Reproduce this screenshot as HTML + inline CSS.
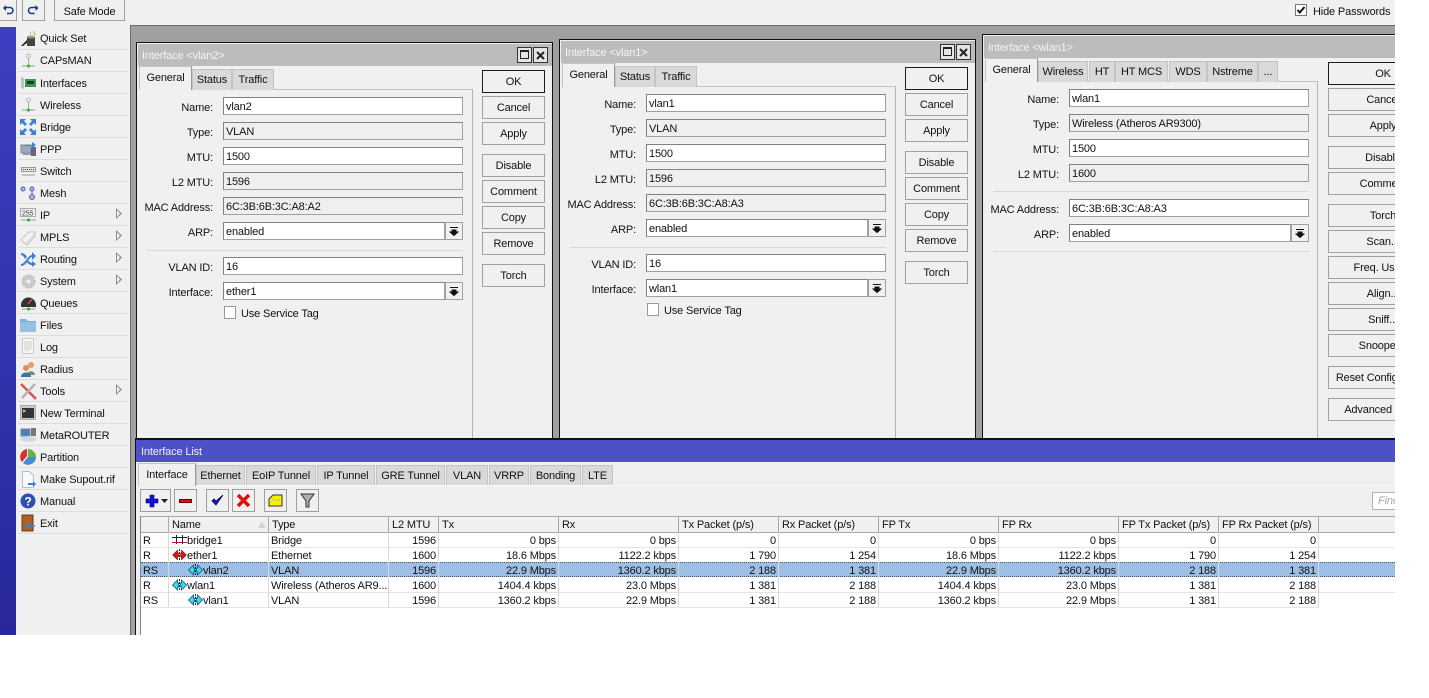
<!DOCTYPE html>
<html><head><meta charset="utf-8"><style>
html,body{margin:0;padding:0;background:#fff}
body{width:1429px;height:698px;overflow:hidden;position:relative;font:11px "Liberation Sans",Arial,sans-serif;color:#111;letter-spacing:-.15px}
#app{position:absolute;left:0;top:0;width:1395px;height:635px;overflow:hidden;background:#f0f0f0}
#app div,#app span,#app svg{position:absolute;box-sizing:border-box}
.t{white-space:nowrap;height:14px;line-height:16px}
.r{text-align:right}
.b{border:1px solid #a0a0a0;background:#f0f0f0;text-align:center;white-space:nowrap;padding-top:1px}
.ok{border-color:#1c1c1c}
.f{width:240px;height:18px;border:1px solid #a0a0a0;border-left-color:#808080;border-top-color:#808080;background:#fff;line-height:18px;padding-left:2px;white-space:nowrap}
.ro{background:#efefef}
.win{border:1px solid #111;background:#f0f0f0;overflow:hidden}
.tb{left:1px;top:1px;height:22px;background:#bcbcbc;color:#f4f4f4;padding-left:4px;line-height:24px}
.tab{top:26px;height:21px;background:#d9d9d9;border:1px solid #c4c4c4;border-bottom:0;text-align:center;line-height:21px;white-space:nowrap}
.act{background:#f0f0f0;border:1px solid #c4c4c4;border-right-color:#9a9a9a;border-bottom:0;z-index:2;top:23px;height:24px;line-height:23px}
.m{left:18px;width:110px;height:1px;background:#dcdcdc}
.mt{left:40px;white-space:nowrap;height:14px;line-height:16px}
.ar{left:116px;width:6px;height:11px;background:#8a8a8a;clip-path:polygon(0 0,100% 50%,0 100%)}
.ar:after{content:"";position:absolute;left:1px;top:2px;width:3px;height:7px;background:#f8f8f8;clip-path:polygon(0 0,100% 50%,0 100%)}
.h{top:516px;height:17px;background:#f0f0f0;border-right:1px solid #a8a8a8;border-bottom:1px solid #a8a8a8;border-top:1px solid #a8a8a8;line-height:16px;padding-left:3px;white-space:nowrap;overflow:hidden}
.c{height:15px;line-height:16px;white-space:nowrap}
.cr{text-align:right}
.v{top:532px;width:1px;height:75px;background:#d8d8d8}
.hl{left:141px;top:562px;width:1254px;height:15px;background:#9dbfe6;border-top:1px dotted #555;border-bottom:1px dotted #555}
.wb{width:110px!important}
</style></head><body>
<div id="app">
<!-- top bar -->
<div class="b" style="left:-4px;top:-2px;width:21px;height:23px"></div>
<svg style="left:2px;top:4px" width="12" height="12" viewBox="0 0 12 12"><path d="M3.500 3.500H8a3 3 0 0 1 0 6H5" fill="none" stroke="#123a78" stroke-width="1.500"/><path d="M1 4l3-3v6z" fill="#123a78"/></svg>
<div class="b" style="left:22px;top:-2px;width:23px;height:23px"></div>
<svg style="left:27px;top:4px" width="13" height="12" viewBox="0 0 12 12"><path d="M8.500 3.500H4a3 3 0 0 0 0 6h3" fill="none" stroke="#123a78" stroke-width="1.500"/><path d="M11 4L8 1v6z" fill="#123a78"/></svg>
<div class="b" style="left:54px;top:-2px;width:71px;height:23px;line-height:25px">Safe Mode</div>
<div style="left:1295px;top:4px;width:12px;height:12px;border:1px solid #777;background:#fff"></div>
<svg style="left:1296px;top:5px" width="10" height="10" viewBox="0 0 10 10"><path d="M1.500 5l2.300 2.500L8.500 2" fill="none" stroke="#111" stroke-width="2"/></svg>
<div class="t" style="left:1313px;top:4px">Hide Passwords</div>

<!-- left -->
<div style="left:0;top:27px;width:16px;height:608px;background:linear-gradient(#3e3ec0,#28289c)"></div>
<div style="left:130px;top:25px;width:1265px;height:610px;background:#a0a0a0;border-left:1px solid #6c6c6c;border-top:1px solid #6c6c6c"></div>
<div style="left:0;top:25px;width:130px;height:2px;background:#f0f0f0"></div>

<div class="mt" style="top:31px">Quick Set</div><div class="m" style="top:49px"></div>
<div class="mt" style="top:53px">CAPsMAN</div><div class="m" style="top:71px"></div>
<div class="mt" style="top:76px">Interfaces</div><div class="m" style="top:93px"></div>
<div class="mt" style="top:98px">Wireless</div><div class="m" style="top:115px"></div>
<div class="mt" style="top:120px">Bridge</div><div class="m" style="top:137px"></div>
<div class="mt" style="top:142px">PPP</div><div class="m" style="top:159px"></div>
<div class="mt" style="top:164px">Switch</div><div class="m" style="top:181px"></div>
<div class="mt" style="top:186px">Mesh</div><div class="m" style="top:203px"></div>
<div class="mt" style="top:208px">IP</div><div class="m" style="top:225px"></div><div class="ar" style="top:208px"></div>
<div class="mt" style="top:230px">MPLS</div><div class="m" style="top:247px"></div><div class="ar" style="top:230px"></div>
<div class="mt" style="top:252px">Routing</div><div class="m" style="top:269px"></div><div class="ar" style="top:252px"></div>
<div class="mt" style="top:274px">System</div><div class="m" style="top:291px"></div><div class="ar" style="top:274px"></div>
<div class="mt" style="top:296px">Queues</div><div class="m" style="top:313px"></div>
<div class="mt" style="top:318px">Files</div><div class="m" style="top:335px"></div>
<div class="mt" style="top:340px">Log</div><div class="m" style="top:357px"></div>
<div class="mt" style="top:362px">Radius</div><div class="m" style="top:379px"></div>
<div class="mt" style="top:384px">Tools</div><div class="m" style="top:401px"></div><div class="ar" style="top:384px"></div>
<div class="mt" style="top:406px">New Terminal</div><div class="m" style="top:423px"></div>
<div class="mt" style="top:428px">MetaROUTER</div><div class="m" style="top:445px"></div>
<div class="mt" style="top:450px">Partition</div><div class="m" style="top:467px"></div>
<div class="mt" style="top:472px">Make Supout.rif</div><div class="m" style="top:489px"></div>
<div class="mt" style="top:494px">Manual</div><div class="m" style="top:511px"></div>
<div class="mt" style="top:516px">Exit</div><div class="m" style="top:533px"></div>

<!-- sidebar icons -->
<svg style="left:20px;top:30px" width="17" height="17" viewBox="0 0 17 17"><path d="M1 16l6-6 1 2-5 4z" fill="#222"/><path d="M7 7h8v9H7z" fill="#444"/><ellipse cx="11" cy="7" rx="4" ry="1.500" fill="#999"/><path d="M10 2l1 2M14 1v3M16 4l-2 1" stroke="#d8b040"/></svg>
<svg style="left:20px;top:53px" width="17" height="16" viewBox="0 0 17 16"><circle cx="8.500" cy="3" r="2" fill="none" stroke="#bbb"/><path d="M8.500 5v8" stroke="#aaa"/><path d="M2 13h13" stroke="#7ab07a"/><circle cx="8.500" cy="13" r="1.500" fill="#3aa03a"/></svg>
<svg style="left:20px;top:75px" width="17" height="16" viewBox="0 0 17 16"><path d="M1 2l3 1v11l-3-1z" fill="#b8c4c8"/><rect x="5" y="4" width="11" height="8" fill="#3a9a4a"/><rect x="7" y="6" width="7" height="3" fill="#234"/></svg>
<svg style="left:20px;top:97px" width="17" height="16" viewBox="0 0 17 16"><circle cx="8.500" cy="3" r="2" fill="none" stroke="#bbb"/><path d="M8.500 5v8" stroke="#aaa"/><path d="M2 13h13" stroke="#7ab07a"/><circle cx="8.500" cy="13" r="1.500" fill="#3aa03a"/></svg>
<svg style="left:20px;top:119px" width="16" height="16" viewBox="0 0 16 16" fill="#3a80d8"><path d="M0 0h6L4 2l3 3-2 2-3-3-2 2zM16 0v6l-2-2-3 3-2-2 3-3-2-2zM0 16v-6l2 2 3-3 2 2-3 3 2 2zM16 16h-6l2-2-3-3 2-2 3 3 2-2z"/></svg>
<svg style="left:20px;top:141px" width="17" height="16" viewBox="0 0 17 16"><rect x="1" y="4" width="10" height="8" fill="#9ab" stroke="#789"/><rect x="11" y="6" width="5" height="9" fill="#667"/><path d="M6 4h6V1l4 3-4 3V5H6z" fill="#3a80d8"/><path d="M3 13h8" stroke="#999" stroke-width="2"/></svg>
<svg style="left:20px;top:165px" width="17" height="12" viewBox="0 0 17 12"><path d="M1.500 2.500h14v4h-14z" fill="#e4e4e4" stroke="#999"/><path d="M3 4.500h11" stroke="#444" stroke-dasharray="1 1"/><path d="M2 10h13" stroke="#7ab07a"/></svg>
<svg style="left:20px;top:186px" width="16" height="15" viewBox="0 0 16 15" fill="#a8b8e8" stroke="#5060b0"><circle cx="3" cy="3" r="2"/><circle cx="12" cy="3" r="2"/><circle cx="12" cy="11" r="2.500"/><path d="M12 5v3" fill="none"/></svg>
<svg style="left:20px;top:208px" width="17" height="15" viewBox="0 0 17 15"><rect x=".5" y=".5" width="15" height="8" fill="#eee" stroke="#aaa"/><text x="2" y="7.500" font-family="Liberation Sans" font-size="7" fill="#444">255</text><path d="M1 12h15" stroke="#7ab07a"/><circle cx="8.500" cy="12" r="1.500" fill="#3aa03a"/></svg>
<svg style="left:20px;top:230px" width="17" height="16" viewBox="0 0 17 16"><path d="M1 10l8-8h6v4l-8 9z" fill="#f4f4f4" stroke="#c4c4c4"/><path d="M6 13l9-9" stroke="#ccc"/></svg>
<svg style="left:20px;top:251px" width="17" height="16" viewBox="0 0 17 16"><path d="M1 13C5 13 8 4 12 4V1l4 4-4 4V6C9 6 7 15 1 15z" fill="#3a80d8"/><path d="M1 2c3 0 5 2 6 4l-2 2C4 6 3 4 1 4zM9 10c1 1 2 2 3 2v-2l4 3-4 3v-2c-2 0-4-1-5-3z" fill="#3a80d8"/></svg>
<svg style="left:21px;top:274px" width="15" height="15" viewBox="0 0 16 16"><circle cx="8" cy="8" r="6.500" fill="#cfcfcf" stroke="#bcbcbc" stroke-width="2" stroke-dasharray="2 1"/><circle cx="8" cy="8" r="3" fill="#eee" stroke="#bbb"/></svg>
<svg style="left:20px;top:295px" width="17" height="17" viewBox="0 0 17 17"><path d="M1 10a7.500 7.500 0 0 1 15 0v2H1z" fill="#333"/><path d="M8 9l4-5" stroke="#e04444" stroke-width="1.500"/><path d="M2 14h13" stroke="#7ab07a"/><circle cx="8.500" cy="14" r="1.500" fill="#3aa03a"/></svg>
<svg style="left:20px;top:317px" width="16" height="15" viewBox="0 0 16 15"><path d="M0 2h6l2 2h8v11H0z" fill="#7fb0d8"/><path d="M0 5h16v10H0z" fill="#96c0e0"/></svg>
<svg style="left:22px;top:338px" width="12" height="16" viewBox="0 0 12 16"><rect x=".5" y=".5" width="11" height="15" fill="#f5f8f4" stroke="#ccc"/><path d="M2 4h8M2 6h8M2 8h8M2 10h8M2 12h6" stroke="#c8d4c4"/></svg>
<svg style="left:20px;top:361px" width="17" height="16" viewBox="0 0 17 16"><circle cx="11" cy="4" r="3" fill="#e0a070"/><path d="M7 14c0-5 8-5 8 0z" fill="#6a9a5a"/><circle cx="6" cy="7" r="3" fill="#d89060"/><path d="M1 16c0-6 10-6 10 0z" fill="#3a70b0"/></svg>
<svg style="left:20px;top:383px" width="17" height="17" viewBox="0 0 17 17"><path d="M1 1l15 15" stroke="#d85050" stroke-width="2.500"/><path d="M15 1L2 15" stroke="#b4b4b4" stroke-width="2.500"/></svg>
<svg style="left:20px;top:405px" width="16" height="15" viewBox="0 0 16 15"><rect x=".5" y=".5" width="15" height="14" fill="#ccc" stroke="#aaa"/><rect x="2" y="3" width="12" height="10" fill="#333"/><path d="M3 5l2 1-2 1" stroke="#ddd" fill="none"/></svg>
<svg style="left:20px;top:427px" width="17" height="16" viewBox="0 0 17 16"><rect x="1" y="2" width="9" height="7" fill="#4a80c0" stroke="#789"/><rect x="11" y="1" width="5" height="8" fill="#777"/><ellipse cx="8.500" cy="12" rx="8" ry="3" fill="#cfd8e4"/></svg>
<svg style="left:20px;top:449px" width="16" height="16" viewBox="0 0 16 16"><path d="M8 8V0a8 8 0 0 1 8 8z" fill="#6ab04a"/><path d="M8 8h8a8 8 0 0 1-13 6z" fill="#3a90d0"/><path d="M7 7L2 13A8 8 0 0 1 7 0z" fill="#d83030"/></svg>
<svg style="left:22px;top:471px" width="15" height="17" viewBox="0 0 15 17"><path d="M.5.500h7l4 4v12H.5z" fill="#f8f8ff" stroke="#bbc"/><path d="M6 12h5v-2l3 3-3 3v-2H6z" fill="#3a80d8"/></svg>
<svg style="left:20px;top:493px" width="16" height="16" viewBox="0 0 16 16"><circle cx="8" cy="8" r="7.500" fill="#2c50b0"/><text x="4.500" y="12.500" font-family="Liberation Sans" font-weight="700" font-size="12" fill="#fff">?</text></svg>
<svg style="left:21px;top:514px" width="15" height="18" viewBox="0 0 15 18"><rect x="1" y="1" width="11" height="16" fill="#a8602c" stroke="#6a3a18"/><path d="M7 12h7M9 10l-3 2 3 2" stroke="#3a80d8" fill="none" stroke-width="1.500"/></svg>

<!-- window 1 -->
<div class="win" style="left:136px;top:42px;width:417px;height:420px">
 <div class="tb" style="width:414px">Interface &lt;vlan2&gt;</div>
 <div class="b" style="left:380px;top:4px;width:15px;height:16px;border-color:#333;background:#e4e4e4"></div><div style="left:383px;top:7px;width:9px;height:9px;border:1px solid #222;border-top-width:2px"></div>
 <div class="b" style="left:396px;top:4px;width:15px;height:16px;border-color:#333;background:#e4e4e4"></div><svg style="left:399px;top:8px" width="9" height="9" viewBox="0 0 9 9"><path d="M1 1l7 7M8 1L1 8" stroke="#222" stroke-width="2"/></svg>
 <div style="left:2px;top:46px;width:333px;height:1px;background:#c4c4c4"></div><div style="left:335px;top:46px;width:1px;height:360px;background:#b4b4b4"></div>
 <div class="tab act" style="left:2px;width:53px">General</div><div class="tab" style="left:55px;width:40px">Status</div><div class="tab" style="left:95px;width:42px">Traffic</div>
 <div class="t r" style="left:0;width:76px;top:57px">Name:</div><div class="f" style="left:86px;top:54px">vlan2</div>
 <div class="t r" style="left:0;width:76px;top:82px">Type:</div><div class="f ro" style="left:86px;top:79px">VLAN</div>
 <div class="t r" style="left:0;width:76px;top:107px">MTU:</div><div class="f" style="left:86px;top:104px">1500</div>
 <div class="t r" style="left:0;width:76px;top:132px">L2 MTU:</div><div class="f ro" style="left:86px;top:129px">1596</div>
 <div class="t r" style="left:0;width:76px;top:157px">MAC Address:</div><div class="f ro" style="left:86px;top:154px">6C:3B:6B:3C:A8:A2</div>
 <div class="t r" style="left:0;width:76px;top:182px">ARP:</div><div class="f" style="left:86px;top:179px;width:222px">enabled</div>
 <div class="b" style="left:308px;top:179px;width:18px;height:18px"></div><svg style="left:312px;top:183px" width="10" height="10" viewBox="0 0 10 10"><path d="M1 1.500h8M3 4h4v2h2L5 9.500 1 6h2z" stroke="#111" fill="#111"/></svg>
 <div style="left:10px;top:207px;width:316px;height:1px;background:#d8d8d8"></div>
 <div class="t r" style="left:0;width:76px;top:217px">VLAN ID:</div><div class="f" style="left:86px;top:214px">16</div>
 <div class="t r" style="left:0;width:76px;top:242px">Interface:</div><div class="f" style="left:86px;top:239px;width:222px">ether1</div>
 <div class="b" style="left:308px;top:239px;width:18px;height:18px"></div><svg style="left:312px;top:243px" width="10" height="10" viewBox="0 0 10 10"><path d="M1 1.500h8M3 4h4v2h2L5 9.500 1 6h2z" stroke="#111" fill="#111"/></svg>
 <div style="left:87px;top:263px;width:12px;height:13px;border:1px solid #999;background:#fff"></div><div class="t" style="left:104px;top:263px">Use Service Tag</div>
 <div class="b ok" style="left:345px;top:27px;width:63px;height:23px;line-height:21px">OK</div>
 <div class="b" style="left:345px;top:53px;width:63px;height:23px;line-height:21px">Cancel</div>
 <div class="b" style="left:345px;top:79px;width:63px;height:23px;line-height:21px">Apply</div>
 <div class="b" style="left:345px;top:111px;width:63px;height:23px;line-height:21px">Disable</div>
 <div class="b" style="left:345px;top:137px;width:63px;height:23px;line-height:21px">Comment</div>
 <div class="b" style="left:345px;top:163px;width:63px;height:23px;line-height:21px">Copy</div>
 <div class="b" style="left:345px;top:189px;width:63px;height:23px;line-height:21px">Remove</div>
 <div class="b" style="left:345px;top:221px;width:63px;height:23px;line-height:21px">Torch</div>
</div>

<!-- window 2 -->
<div class="win" style="left:559px;top:39px;width:417px;height:420px">
 <div class="tb" style="width:414px">Interface &lt;vlan1&gt;</div>
 <div class="b" style="left:380px;top:4px;width:15px;height:16px;border-color:#333;background:#e4e4e4"></div><div style="left:383px;top:7px;width:9px;height:9px;border:1px solid #222;border-top-width:2px"></div>
 <div class="b" style="left:396px;top:4px;width:15px;height:16px;border-color:#333;background:#e4e4e4"></div><svg style="left:399px;top:8px" width="9" height="9" viewBox="0 0 9 9"><path d="M1 1l7 7M8 1L1 8" stroke="#222" stroke-width="2"/></svg>
 <div style="left:2px;top:46px;width:333px;height:1px;background:#c4c4c4"></div><div style="left:335px;top:46px;width:1px;height:360px;background:#b4b4b4"></div>
 <div class="tab act" style="left:2px;width:53px">General</div><div class="tab" style="left:55px;width:40px">Status</div><div class="tab" style="left:95px;width:42px">Traffic</div>
 <div class="t r" style="left:0;width:76px;top:57px">Name:</div><div class="f" style="left:86px;top:54px">vlan1</div>
 <div class="t r" style="left:0;width:76px;top:82px">Type:</div><div class="f ro" style="left:86px;top:79px">VLAN</div>
 <div class="t r" style="left:0;width:76px;top:107px">MTU:</div><div class="f" style="left:86px;top:104px">1500</div>
 <div class="t r" style="left:0;width:76px;top:132px">L2 MTU:</div><div class="f ro" style="left:86px;top:129px">1596</div>
 <div class="t r" style="left:0;width:76px;top:157px">MAC Address:</div><div class="f ro" style="left:86px;top:154px">6C:3B:6B:3C:A8:A3</div>
 <div class="t r" style="left:0;width:76px;top:182px">ARP:</div><div class="f" style="left:86px;top:179px;width:222px">enabled</div>
 <div class="b" style="left:308px;top:179px;width:18px;height:18px"></div><svg style="left:312px;top:183px" width="10" height="10" viewBox="0 0 10 10"><path d="M1 1.500h8M3 4h4v2h2L5 9.500 1 6h2z" stroke="#111" fill="#111"/></svg>
 <div style="left:10px;top:207px;width:316px;height:1px;background:#d8d8d8"></div>
 <div class="t r" style="left:0;width:76px;top:217px">VLAN ID:</div><div class="f" style="left:86px;top:214px">16</div>
 <div class="t r" style="left:0;width:76px;top:242px">Interface:</div><div class="f" style="left:86px;top:239px;width:222px">wlan1</div>
 <div class="b" style="left:308px;top:239px;width:18px;height:18px"></div><svg style="left:312px;top:243px" width="10" height="10" viewBox="0 0 10 10"><path d="M1 1.500h8M3 4h4v2h2L5 9.500 1 6h2z" stroke="#111" fill="#111"/></svg>
 <div style="left:87px;top:263px;width:12px;height:13px;border:1px solid #999;background:#fff"></div><div class="t" style="left:104px;top:263px">Use Service Tag</div>
 <div class="b ok" style="left:345px;top:27px;width:63px;height:23px;line-height:21px">OK</div>
 <div class="b" style="left:345px;top:53px;width:63px;height:23px;line-height:21px">Cancel</div>
 <div class="b" style="left:345px;top:79px;width:63px;height:23px;line-height:21px">Apply</div>
 <div class="b" style="left:345px;top:111px;width:63px;height:23px;line-height:21px">Disable</div>
 <div class="b" style="left:345px;top:137px;width:63px;height:23px;line-height:21px">Comment</div>
 <div class="b" style="left:345px;top:163px;width:63px;height:23px;line-height:21px">Copy</div>
 <div class="b" style="left:345px;top:189px;width:63px;height:23px;line-height:21px">Remove</div>
 <div class="b" style="left:345px;top:221px;width:63px;height:23px;line-height:21px">Torch</div>
</div>

<!-- window 3 -->
<div class="win" style="left:982px;top:34px;width:480px;height:420px">
 <div class="tb" style="width:477px">Interface &lt;wlan1&gt;</div>
 <div style="left:2px;top:46px;width:333px;height:1px;background:#c4c4c4"></div><div style="left:334px;top:46px;width:1px;height:360px;background:#b4b4b4"></div>
 <div class="tab act" style="left:2px;width:53px">General</div>
 <div class="tab" style="left:55px;width:50px">Wireless</div><div class="tab" style="left:106px;width:26px">HT</div><div class="tab" style="left:132px;width:53px">HT MCS</div><div class="tab" style="left:186px;width:38px">WDS</div><div class="tab" style="left:224px;width:51px">Nstreme</div><div class="tab" style="left:275px;width:20px">...</div>
 <div class="t r" style="left:0;width:76px;top:57px">Name:</div><div class="f" style="left:86px;top:54px">wlan1</div>
 <div class="t r" style="left:0;width:76px;top:82px">Type:</div><div class="f ro" style="left:86px;top:79px">Wireless (Atheros AR9300)</div>
 <div class="t r" style="left:0;width:76px;top:107px">MTU:</div><div class="f" style="left:86px;top:104px">1500</div>
 <div class="t r" style="left:0;width:76px;top:132px">L2 MTU:</div><div class="f ro" style="left:86px;top:129px">1600</div>
 <div style="left:10px;top:156px;width:316px;height:1px;background:#d8d8d8"></div>
 <div class="t r" style="left:0;width:76px;top:167px">MAC Address:</div><div class="f" style="left:86px;top:164px">6C:3B:6B:3C:A8:A3</div>
 <div class="t r" style="left:0;width:76px;top:192px">ARP:</div><div class="f" style="left:86px;top:189px;width:222px">enabled</div>
 <div class="b" style="left:308px;top:189px;width:18px;height:18px"></div><svg style="left:312px;top:193px" width="10" height="10" viewBox="0 0 10 10"><path d="M1 1.500h8M3 4h4v2h2L5 9.500 1 6h2z" stroke="#111" fill="#111"/></svg>
 <div style="left:10px;top:216px;width:316px;height:1px;background:#d8d8d8"></div>
 <div class="b ok wb" style="left:345px;top:27px;height:23px;line-height:21px">OK</div>
 <div class="b wb" style="left:345px;top:53px;height:23px;line-height:21px">Cancel</div>
 <div class="b wb" style="left:345px;top:79px;height:23px;line-height:21px">Apply</div>
 <div class="b wb" style="left:345px;top:111px;height:23px;line-height:21px">Disable</div>
 <div class="b wb" style="left:345px;top:137px;height:23px;line-height:21px">Comment</div>
 <div class="b wb" style="left:345px;top:169px;height:23px;line-height:21px">Torch</div>
 <div class="b wb" style="left:345px;top:195px;height:23px;line-height:21px">Scan...</div>
 <div class="b wb" style="left:345px;top:221px;height:23px;line-height:21px">Freq. Usage</div>
 <div class="b wb" style="left:345px;top:247px;height:23px;line-height:21px">Align...</div>
 <div class="b wb" style="left:345px;top:273px;height:23px;line-height:21px">Sniff...</div>
 <div class="b wb" style="left:345px;top:299px;height:23px;line-height:21px">Snooper...</div>
 <div class="b wb" style="left:345px;top:331px;height:23px;line-height:21px">Reset Configuration</div>
 <div class="b wb" style="left:345px;top:363px;height:23px;line-height:21px">Advanced Mode</div>
</div>

<!-- interface list -->
<div style="left:135px;top:438px;width:1260px;height:197px;background:#f0f0f0;border-top:2px solid #111;border-left:1px solid #111"></div>
<div style="left:136px;top:440px;width:1259px;height:22px;background:#4e50c8;color:#f0f0f0;padding-left:5px;line-height:24px">Interface List</div>
<div class="tab act" style="left:138px;top:463px;width:58px;height:23px">Interface</div>
<div class="tab" style="left:196px;top:465px;width:49px">Ethernet</div>
<div class="tab" style="left:246px;top:465px;width:70px">EoIP Tunnel</div>
<div class="tab" style="left:317px;top:465px;width:58px">IP Tunnel</div>
<div class="tab" style="left:376px;top:465px;width:69px">GRE Tunnel</div>
<div class="tab" style="left:446px;top:465px;width:42px">VLAN</div>
<div class="tab" style="left:489px;top:465px;width:40px">VRRP</div>
<div class="tab" style="left:530px;top:465px;width:51px">Bonding</div>
<div class="tab" style="left:582px;top:465px;width:31px">LTE</div>
<div style="left:138px;top:485px;width:1257px;height:1px;background:#fafafa"></div>

<div class="b" style="left:140px;top:489px;width:31px;height:23px"></div>
<svg style="left:145px;top:494px" width="23" height="14" viewBox="0 0 23 14"><path d="M5 1h4v4h4v4H9v4H5V9H1V5h4z" fill="#1414d8" stroke="#000040" stroke-width=".6"/><path d="M16 5h7l-3.500 4z" fill="#222"/></svg>
<div class="b" style="left:174px;top:489px;width:23px;height:23px"></div>
<div style="left:179px;top:499px;width:13px;height:4px;background:#e01010;border:1px solid #600"></div>
<div class="b" style="left:206px;top:489px;width:23px;height:23px"></div>
<svg style="left:210px;top:493px" width="15" height="15" viewBox="0 0 15 15"><path d="M2 8l4 4 7-10-7 6-2-2z" fill="#1a1ad8" stroke="#000050" stroke-width=".8"/></svg>
<div class="b" style="left:232px;top:489px;width:23px;height:23px"></div>
<svg style="left:236px;top:493px" width="15" height="15" viewBox="0 0 15 15"><path d="M2 2l11 11M13 2L2 13" stroke="#e01010" stroke-width="3.500"/></svg>
<div class="b" style="left:264px;top:489px;width:23px;height:23px"></div>
<svg style="left:268px;top:494px" width="15" height="13" viewBox="0 0 15 13"><path d="M1 5l4-4h9v11H1z" fill="#f6f000" stroke="#333"/><path d="M5 6h7" stroke="#aaa" stroke-dasharray="1 1"/></svg>
<div class="b" style="left:296px;top:489px;width:23px;height:23px"></div>
<svg style="left:300px;top:493px" width="15" height="15" viewBox="0 0 15 15"><path d="M1 1h13L9 8v6H6V8z" fill="#a8b0b8" stroke="#333"/></svg>
<div style="left:1372px;top:492px;width:30px;height:18px;border:1px solid #b0b0b0;background:#fff;color:#a8a8a8;font-style:italic;padding-left:5px;line-height:16px">Find</div>

<!-- table -->
<div style="left:140px;top:516px;width:1255px;height:119px;background:#fff;border-left:1px solid #888"></div>
<div style="left:141px;top:516px;width:1254px;height:17px;background:#f0f0f0;border-top:1px solid #a8a8a8;border-bottom:1px solid #a8a8a8"></div>
<div class="h" style="left:141px;width:28px"></div>
<div class="h" style="left:169px;width:100px">Name</div>
<div class="h" style="left:269px;width:120px">Type</div>
<div class="h" style="left:389px;width:50px">L2 MTU</div>
<div class="h" style="left:439px;width:120px">Tx</div>
<div class="h" style="left:559px;width:120px">Rx</div>
<div class="h" style="left:679px;width:100px">Tx Packet (p/s)</div>
<div class="h" style="left:779px;width:100px">Rx Packet (p/s)</div>
<div class="h" style="left:879px;width:120px">FP Tx</div>
<div class="h" style="left:999px;width:120px">FP Rx</div>
<div class="h" style="left:1119px;width:100px">FP Tx Packet (p/s)</div>
<div class="h" style="left:1219px;width:100px">FP Rx Packet (p/s)</div>
<div style="left:258px;top:521px;width:0;height:0;border-left:4px solid transparent;border-right:4px solid transparent;border-bottom:7px solid #d4d4d4"></div>

<div class="hl"></div>
<div style="left:141px;top:547px;width:1254px;height:1px;background:#e4e4e4"></div>
<div style="left:141px;top:592px;width:1254px;height:1px;background:#e4e4e4"></div>
<div style="left:141px;top:607px;width:1178px;height:1px;background:#e4e4e4"></div>
<div class="v" style="left:168px"></div><div class="v" style="left:268px"></div><div class="v" style="left:388px"></div><div class="v" style="left:438px"></div><div class="v" style="left:558px"></div><div class="v" style="left:678px"></div><div class="v" style="left:778px"></div><div class="v" style="left:878px"></div><div class="v" style="left:998px"></div><div class="v" style="left:1118px"></div><div class="v" style="left:1218px"></div><div class="v" style="left:1318px"></div>

<div class="c" style="left:143px;top:533px">R</div><div class="c" style="left:187px;top:533px">bridge1</div><div class="c" style="left:271px;top:533px">Bridge</div>
<div class="c cr" style="left:389px;width:47px;top:533px">1596</div><div class="c cr" style="left:439px;width:117px;top:533px">0 bps</div><div class="c cr" style="left:559px;width:117px;top:533px">0 bps</div><div class="c cr" style="left:679px;width:97px;top:533px">0</div><div class="c cr" style="left:779px;width:97px;top:533px">0</div><div class="c cr" style="left:879px;width:117px;top:533px">0 bps</div><div class="c cr" style="left:999px;width:117px;top:533px">0 bps</div><div class="c cr" style="left:1119px;width:97px;top:533px">0</div><div class="c cr" style="left:1219px;width:97px;top:533px">0</div>

<div class="c" style="left:143px;top:548px">R</div><div class="c" style="left:187px;top:548px">ether1</div><div class="c" style="left:271px;top:548px">Ethernet</div>
<div class="c cr" style="left:389px;width:47px;top:548px">1600</div><div class="c cr" style="left:439px;width:117px;top:548px">18.6 Mbps</div><div class="c cr" style="left:559px;width:117px;top:548px">1122.2 kbps</div><div class="c cr" style="left:679px;width:97px;top:548px">1 790</div><div class="c cr" style="left:779px;width:97px;top:548px">1 254</div><div class="c cr" style="left:879px;width:117px;top:548px">18.6 Mbps</div><div class="c cr" style="left:999px;width:117px;top:548px">1122.2 kbps</div><div class="c cr" style="left:1119px;width:97px;top:548px">1 790</div><div class="c cr" style="left:1219px;width:97px;top:548px">1 254</div>

<div class="c" style="left:143px;top:563px">RS</div><div class="c" style="left:203px;top:563px">vlan2</div><div class="c" style="left:271px;top:563px">VLAN</div>
<div class="c cr" style="left:389px;width:47px;top:563px">1596</div><div class="c cr" style="left:439px;width:117px;top:563px">22.9 Mbps</div><div class="c cr" style="left:559px;width:117px;top:563px">1360.2 kbps</div><div class="c cr" style="left:679px;width:97px;top:563px">2 188</div><div class="c cr" style="left:779px;width:97px;top:563px">1 381</div><div class="c cr" style="left:879px;width:117px;top:563px">22.9 Mbps</div><div class="c cr" style="left:999px;width:117px;top:563px">1360.2 kbps</div><div class="c cr" style="left:1119px;width:97px;top:563px">2 188</div><div class="c cr" style="left:1219px;width:97px;top:563px">1 381</div>

<div class="c" style="left:143px;top:578px">R</div><div class="c" style="left:187px;top:578px">wlan1</div><div class="c" style="left:271px;top:578px">Wireless (Atheros AR9...</div>
<div class="c cr" style="left:389px;width:47px;top:578px">1600</div><div class="c cr" style="left:439px;width:117px;top:578px">1404.4 kbps</div><div class="c cr" style="left:559px;width:117px;top:578px">23.0 Mbps</div><div class="c cr" style="left:679px;width:97px;top:578px">1 381</div><div class="c cr" style="left:779px;width:97px;top:578px">2 188</div><div class="c cr" style="left:879px;width:117px;top:578px">1404.4 kbps</div><div class="c cr" style="left:999px;width:117px;top:578px">23.0 Mbps</div><div class="c cr" style="left:1119px;width:97px;top:578px">1 381</div><div class="c cr" style="left:1219px;width:97px;top:578px">2 188</div>

<div class="c" style="left:143px;top:593px">RS</div><div class="c" style="left:203px;top:593px">vlan1</div><div class="c" style="left:271px;top:593px">VLAN</div>
<div class="c cr" style="left:389px;width:47px;top:593px">1596</div><div class="c cr" style="left:439px;width:117px;top:593px">1360.2 kbps</div><div class="c cr" style="left:559px;width:117px;top:593px">22.9 Mbps</div><div class="c cr" style="left:679px;width:97px;top:593px">1 381</div><div class="c cr" style="left:779px;width:97px;top:593px">2 188</div><div class="c cr" style="left:879px;width:117px;top:593px">1360.2 kbps</div><div class="c cr" style="left:999px;width:117px;top:593px">22.9 Mbps</div><div class="c cr" style="left:1119px;width:97px;top:593px">1 381</div><div class="c cr" style="left:1219px;width:97px;top:593px">2 188</div>

<svg style="left:172px;top:534px" width="15" height="12" viewBox="0 0 15 12"><path d="M0 3.500h15M4.500 1v9M10.500 1v9" stroke="#222" fill="none"/><path d="M0 8.500h15" stroke="#b02020"/></svg>
<svg style="left:172px;top:549px" width="15" height="12" viewBox="0 0 15 12"><path d="M.5 6L5.500 1v3h1v4h-1v3zM14.500 6L9.500 1v3h-1v4h1v3z" fill="#d01818" stroke="#500"  stroke-width=".5"/><path d="M7.500 0v12" stroke="#222" stroke-dasharray="2 1"/></svg>
<svg style="left:188px;top:564px" width="15" height="12" viewBox="0 0 15 12"><path d="M.5 6L5.500 1v3h1v4h-1v3zM14.500 6L9.500 1v3h-1v4h1v3z" fill="#30e0f0" stroke="#046" stroke-width=".7"/><path d="M7.500 0v12" stroke="#222" stroke-dasharray="2 1"/></svg>
<svg style="left:172px;top:579px" width="15" height="12" viewBox="0 0 15 12"><path d="M.5 6L5.500 1v3h1v4h-1v3zM14.500 6L9.500 1v3h-1v4h1v3z" fill="#30e0f0" stroke="#046" stroke-width=".7"/><path d="M7.500 0v12" stroke="#222" stroke-dasharray="2 1"/></svg>
<svg style="left:188px;top:594px" width="15" height="12" viewBox="0 0 15 12"><path d="M.5 6L5.500 1v3h1v4h-1v3zM14.500 6L9.500 1v3h-1v4h1v3z" fill="#30e0f0" stroke="#046" stroke-width=".7"/><path d="M7.500 0v12" stroke="#222" stroke-dasharray="2 1"/></svg>
</div>
</body></html>
